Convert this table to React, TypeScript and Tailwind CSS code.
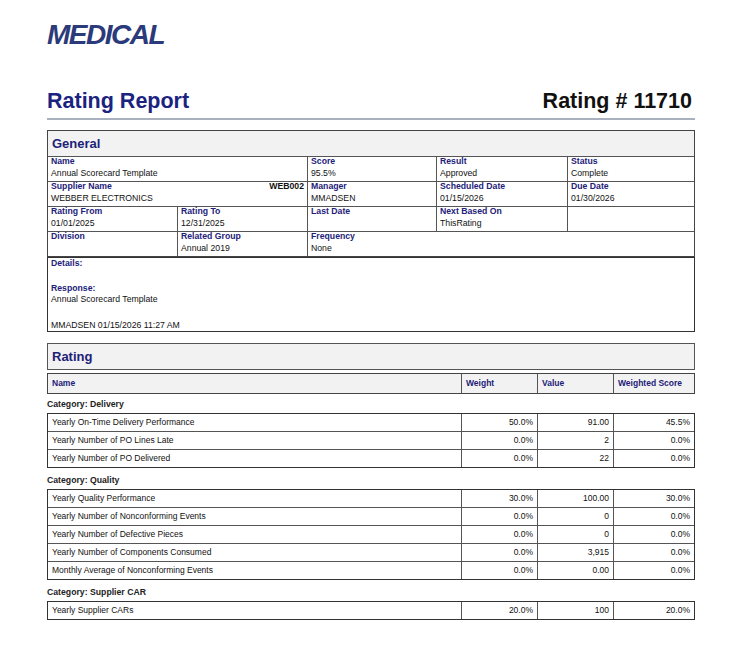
import React from 'react';

const NAVY = 'text-[#1d2178]';

type Cell = { label?: string; value?: string; span?: number; extra?: string };

const generalRows: Cell[][] = [
  [
    { label: 'Name', value: 'Annual Scorecard Template', span: 2 },
    { label: 'Score', value: '95.5%' },
    { label: 'Result', value: 'Approved' },
    { label: 'Status', value: 'Complete' },
  ],
  [
    { label: 'Supplier Name', value: 'WEBBER ELECTRONICS', span: 2, extra: 'WEB002' },
    { label: 'Manager', value: 'MMADSEN' },
    { label: 'Scheduled Date', value: '01/15/2026' },
    { label: 'Due Date', value: '01/30/2026' },
  ],
  [
    { label: 'Rating From', value: '01/01/2025' },
    { label: 'Rating To', value: '12/31/2025' },
    { label: 'Last Date' },
    { label: 'Next Based On', value: 'ThisRating' },
    {},
  ],
  [
    { label: 'Division' },
    { label: 'Related Group', value: 'Annual 2019' },
    { label: 'Frequency', value: 'None', span: 3 },
  ],
];

const categories = [
  {
    name: 'Delivery',
    first: true,
    rows: [
      ['Yearly On-Time Delivery Performance', '50.0%', '91.00', '45.5%'],
      ['Yearly Number of PO Lines Late', '0.0%', '2', '0.0%'],
      ['Yearly Number of PO Delivered', '0.0%', '22', '0.0%'],
    ],
  },
  {
    name: 'Quality',
    rows: [
      ['Yearly Quality Performance', '30.0%', '100.00', '30.0%'],
      ['Yearly Number of Nonconforming Events', '0.0%', '0', '0.0%'],
      ['Yearly Number of Defective Pieces', '0.0%', '0', '0.0%'],
      ['Yearly Number of Components Consumed', '0.0%', '3,915', '0.0%'],
      ['Monthly Average of Nonconforming Events', '0.0%', '0.00', '0.0%'],
    ],
  },
  {
    name: 'Supplier CAR',
    rows: [['Yearly Supplier CARs', '20.0%', '100', '20.0%']],
  },
];

function GeneralCell({ cell, first }: { cell: Cell; first: boolean }) {
  const span =
    cell.span === 3 ? 'col-span-3' : cell.span === 2 ? 'col-span-2' : 'col-span-1';
  return (
    <div className={`${span} ${first ? '' : 'border-l border-[#555]'} h-[24px] px-[3px]`}>
      <div className={`flex justify-between font-bold leading-[8px] ${NAVY}`}>
        <span>{cell.label}</span>
        {cell.extra && <span className="text-[#111]">{cell.extra}</span>}
      </div>
      <div className="leading-[16px] text-[#111]">{cell.value}</div>
    </div>
  );
}

export default function App() {
  return (
    <div className="min-h-[650px] bg-white px-[47px] pb-6 font-['Liberation_Sans',Arial,sans-serif]">
      {/* Логотип */}
      <div className="pt-[21px]">
        <span className="block text-[28px] font-bold italic leading-[28px] tracking-[-1.5px] text-[#2b3a7a]">
          MEDICAL
        </span>
      </div>

      {/* Заголовок */}
      <div className="mt-[41px] flex items-end justify-between border-b-2 border-[#aab1be] pb-[6px]">
        <span className="text-[21.5px] font-bold leading-[22px] text-[#1b2380]">Rating Report</span>
        <span className="pr-[3px] text-[21.5px] font-bold leading-[22px] text-[#111]">Rating # 11710</span>
      </div>

      {/* General */}
      <div className="mt-[10px] border border-[#444] text-[8.7px]">
        <div className="flex h-[25px] items-center bg-[#f2f2f2] px-[4px] text-[13px] font-bold text-[#1d2178]">
          General
        </div>
        {generalRows.map((row, i) => (
          <div key={i} className="grid grid-cols-[129px_130px_129px_131px_1fr] border-t border-[#555]">
            {row.map((cell, j) => (
              <GeneralCell key={j} cell={cell} first={j === 0} />
            ))}
          </div>
        ))}
      </div>
      <div className="border-x border-b border-t border-[#333] px-[3px] text-[8.7px] leading-[11px]">
        <div className={`font-bold ${NAVY}`}>Details:</div>
        <div className={`mt-[14px] font-bold ${NAVY}`}>Response:</div>
        <div className="text-[#111]">Annual Scorecard Template</div>
        <div className="mt-[15px] text-[#111]">MMADSEN 01/15/2026 11:27 AM</div>
      </div>

      {/* Rating */}
      <div className="mt-[11px] flex h-[27px] items-center border border-[#555] bg-[#f2f2f2] px-[4px] text-[13px] font-bold text-[#1d2178]">
        Rating
      </div>

      <div className="mt-[3px] flex h-[21px] border border-[#444] bg-[#f2f2f2] text-[8.5px] font-bold text-[#1d2178]">
        <div className="flex flex-1 items-center px-[4px]">Name</div>
        <div className="flex w-[76px] items-center border-l border-[#555] px-[4px]">Weight</div>
        <div className="flex w-[76px] items-center border-l border-[#555] px-[4px]">Value</div>
        <div className="flex w-[81px] items-center border-l border-[#555] px-[4px]">Weighted Score</div>
      </div>

      {categories.map((cat) => (
        <div key={cat.name}>
          <div
            className={`flex items-end pb-[3px] text-[8.7px] font-bold leading-[11px] text-[#222] ${
              cat.first ? 'h-[19px]' : 'h-[21px]'
            }`}
          >
            Category: {cat.name}
          </div>
          <div className="border border-[#333] text-[8.5px] text-[#111]">
            {cat.rows.map((r, i) => (
              <div key={i} className={i === 0 ? 'flex h-[17px]' : 'flex h-[18px] border-t border-[#555]'}>
                <div className="flex flex-1 items-center px-[4px]">{r[0]}</div>
                <div className="flex w-[76px] items-center justify-end border-l border-[#555] px-[4px]">{r[1]}</div>
                <div className="flex w-[76px] items-center justify-end border-l border-[#555] px-[4px]">{r[2]}</div>
                <div className="flex w-[81px] items-center justify-end border-l border-[#555] px-[4px]">{r[3]}</div>
              </div>
            ))}
          </div>
        </div>
      ))}
    </div>
  );
}
